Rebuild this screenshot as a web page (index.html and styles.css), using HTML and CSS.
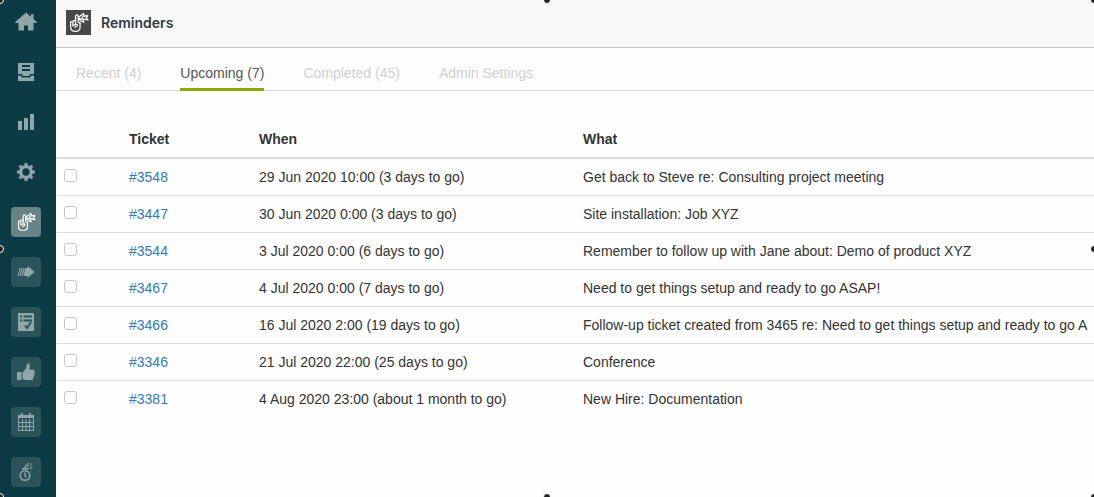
FILE: index.html
```html
<!DOCTYPE html>
<html lang="en">
<head>
  <meta charset="UTF-8" />
  <meta name="viewport" content="width=device-width, initial-scale=1.0"/>
  <title>Reminders</title>
  <link rel="stylesheet" href="styles.css">
</head>

<body>
  <!-- Shared icon -->
  <svg class="defs" width="0" height="0" aria-hidden="true">
    <symbol id="reminder" viewBox="0 0 20 20">
      <g fill="none" stroke="currentColor" stroke-width="1.2" stroke-linejoin="round" stroke-linecap="round">
        <path d="M2.500 10v4.500c0 2.500 1.800 4 4.500 4s4.500-1.600 4.500-4V10.500"/>
        <path d="M2.500 10.200c0-1.800 2.300-1.800 2.300 0V12M4.800 9.300c0-1.800 2.400-1.800 2.400 0V11M7.200 9V4.200c0-1.800 2.600-1.800 2.600 0V9.800c1 0 1.700.3 1.700 1.200"/>
        <path d="M4.500 13l3-1.200c1.500-.4 1.900 1.200.7 1.800l-1.700.8"/>
        <path d="M9.800 5.200l5-3.700.4 2.500 3.600-.6-1.300 2 1.500 2.200-4.300-.9-1.200.1M9.800 6l4 .7 1.400 3-2.200-.6-3.200-2.600M14.500 4.200l-1 1.200"/>
      </g>
    </symbol>
  </svg>

  <div class="app">
    <nav class="sidebar" aria-label="Main">
      <button class="nav-item" aria-label="Home">
        <svg width="24" height="20" viewBox="0 0 24 20"><path fill="currentColor" d="M12 0.500L1 10.200V11h3.500v7.500H10v-5h4v5h5.500V11H23v-.8L19.500 7V2H17v2.800z"/></svg>
      </button>
      <button class="nav-item" aria-label="Views">
        <svg width="18" height="18" viewBox="0 0 18 18"><path fill="currentColor" fill-rule="evenodd" d="M1 0h16v11h-3.500L12 13H6l-1.500-2H1zM5 2v2h8V2zM5 6v2h8V6zM1 12.500h2.500L5 14.500h8l1.500-2H17V18H1z"/></svg>
      </button>
      <button class="nav-item" aria-label="Reporting">
        <svg width="18" height="18" viewBox="0 0 18 18"><path fill="currentColor" d="M1 8h4v9H1zM7 5h4v12H7zM13 1h4v16h-4z"/></svg>
      </button>
      <button class="nav-item" aria-label="Admin">
        <svg width="18" height="18" viewBox="0 0 18 18">
          <g fill="currentColor">
            <rect x="7.500" y="0" width="3" height="18" rx="0.500"/>
            <rect x="7.500" y="0" width="3" height="18" rx="0.500" transform="rotate(45 9 9)"/>
            <rect x="7.500" y="0" width="3" height="18" rx="0.500" transform="rotate(90 9 9)"/>
            <rect x="7.500" y="0" width="3" height="18" rx="0.500" transform="rotate(135 9 9)"/>
            <circle cx="9" cy="9" r="7"/>
          </g>
          <circle class="hole" cx="9" cy="9" r="3.700"/>
        </svg>
      </button>
      <button class="nav-item tile active" aria-label="Reminders">
        <svg width="20" height="20"><use href="#reminder"/></svg>
      </button>
      <button class="nav-item tile" aria-label="Forward">
        <svg width="18" height="14" viewBox="0 0 18 14"><path fill="currentColor" d="M8.500 3H11V1l6.500 6-7 6v-2H6.500zM6.500 3h1.300L5.800 11H4.500zM4.400 3h1.300L3.700 11H2.400zM2.500 3h1L1.500 11h-1z"/></svg>
      </button>
      <button class="nav-item tile" aria-label="Tasks">
        <svg width="18" height="18" viewBox="0 0 18 18">
          <path fill="currentColor" d="M1 0h16v18H1z"/>
          <path class="cut" d="M3 3.500h2M6.500 3.500H15M3 7.500h2M6.500 7.500H15M8 12.500l2 2.500 4-6"/>
        </svg>
      </button>
      <button class="nav-item tile" aria-label="Satisfaction">
        <svg width="18" height="18" viewBox="0 0 18 18"><path fill="currentColor" d="M0 9h4.500v8H0zM5.500 9.200C8 7.500 9.500 5 9.800 2c.1-1.500 1-2 1.900-1.500 1.800 1 1.500 3.500.3 6H16c1.500 0 2.200 1.500 1.400 2.500.6 1 .4 2-.4 2.500.4 1 .2 2-.6 2.400.3 1.700-.4 3.100-2.400 3.100H9c-1.500 0-2.500-.5-3.500-1z"/></svg>
      </button>
      <button class="nav-item tile" aria-label="Calendar">
        <svg width="18" height="18" viewBox="0 0 18 18">
          <path fill="currentColor" d="M1 2h16v3H1zM4 0h2v3H4zM12 0h2v3h-2z"/>
          <path fill="none" stroke="currentColor" d="M1.500 5v12.500h15V5M5.500 6v11M9 6v11M12.500 6v11M1.500 9.500h15M1.500 13.500h15"/>
        </svg>
      </button>
      <button class="nav-item tile" aria-label="Timers">
        <svg width="14" height="20" viewBox="0 0 14 20">
          <g fill="none" stroke="currentColor" stroke-width="1.500">
            <circle cx="6" cy="13.500" r="4.800"/>
            <path d="M6 10.500v3.200l1.500 1.500M4 8V6.700h4V8M6 6.500c0-3 1.500-3.500 3.500-3"/>
            <path d="M9.500 0.500v1.800M12.500 1.500l-1.200 1.300M13.500 4.500h-1.800M12.500 7l-1.200-1.200M9.500 5v1.700" stroke-width="1.200"/>
          </g>
        </svg>
      </button>
    </nav>

    <main class="content">
      <header class="topbar">
        <span class="app-logo"><svg width="21" height="21"><use href="#reminder"/></svg></span>
        <h1>Reminders</h1>
      </header>

      <nav class="tabs" aria-label="Reminder lists">
        <a href="#recent">Recent (4)</a>
        <a href="#upcoming" class="current" aria-current="page">Upcoming (7)</a>
        <a href="#completed">Completed (45)</a>
        <a href="#settings">Admin Settings</a>
      </nav>

      <table class="reminders">
        <thead>
          <tr>
            <th class="col-check"></th>
            <th class="col-ticket">Ticket</th>
            <th class="col-when">When</th>
            <th>What</th>
          </tr>
        </thead>
        <tbody>
          <tr>
            <td><input type="checkbox" aria-label="Select #3548"></td>
            <td><a href="#3548">#3548</a></td>
            <td>29 Jun 2020 10:00 (3 days to go)</td>
            <td>Get back to Steve re: Consulting project meeting</td>
          </tr>
          <tr>
            <td><input type="checkbox" aria-label="Select #3447"></td>
            <td><a href="#3447">#3447</a></td>
            <td>30 Jun 2020 0:00 (3 days to go)</td>
            <td>Site installation: Job XYZ</td>
          </tr>
          <tr>
            <td><input type="checkbox" aria-label="Select #3544"></td>
            <td><a href="#3544">#3544</a></td>
            <td>3 Jul 2020 0:00 (6 days to go)</td>
            <td>Remember to follow up with Jane about: Demo of product XYZ</td>
          </tr>
          <tr>
            <td><input type="checkbox" aria-label="Select #3467"></td>
            <td><a href="#3467">#3467</a></td>
            <td>4 Jul 2020 0:00 (7 days to go)</td>
            <td>Need to get things setup and ready to go ASAP!</td>
          </tr>
          <tr>
            <td><input type="checkbox" aria-label="Select #3466"></td>
            <td><a href="#3466">#3466</a></td>
            <td>16 Jul 2020 2:00 (19 days to go)</td>
            <td>Follow-up ticket created from 3465 re: Need to get things setup and ready to go A</td>
          </tr>
          <tr>
            <td><input type="checkbox" aria-label="Select #3346"></td>
            <td><a href="#3346">#3346</a></td>
            <td>21 Jul 2020 22:00 (25 days to go)</td>
            <td>Conference</td>
          </tr>
          <tr>
            <td><input type="checkbox" aria-label="Select #3381"></td>
            <td><a href="#3381">#3381</a></td>
            <td>4 Aug 2020 23:00 (about 1 month to go)</td>
            <td>New Hire: Documentation</td>
          </tr>
        </tbody>
      </table>
    </main>
  </div>

  <!-- Selection handles round the frame -->
  <div class="handles" aria-hidden="true">
    <i class="top left"></i>
    <i class="top center"></i>
    <i class="top right"></i>
    <i class="middle left"></i>
    <i class="middle right"></i>
    <i class="bottom left"></i>
    <i class="bottom center"></i>
    <i class="bottom right"></i>
  </div>
</body>
</html>
```
FILE: styles.css
```css
* {
  box-sizing: border-box;
}

body {
  margin: 0;
  font-family: "Liberation Sans", Arial, sans-serif;
  font-size: 14px;
  line-height: 20px;
  color: #333;
  background: #fefefe;
}

.defs {
  position: absolute;
}

.app {
  display: flex;
  height: 100vh;
  overflow: hidden;
}

/* Sidebar */
.sidebar {
  flex: none;
  display: flex;
  flex-direction: column;
  gap: 20px;
  width: 56px;
  padding: 7px 0 0 11px;
  background: #0c3b43;
}

.nav-item {
  flex: none;
  display: flex;
  align-items: center;
  justify-content: center;
  width: 30px;
  height: 30px;
  padding: 0;
  border: none;
  border-radius: 4px;
  background: none;
  color: #8fa6aa;
  cursor: pointer;
}

.tile {
  background: #2a535a;
}

.tile.active {
  background: #678386;
  color: #fff;
}

.hole {
  fill: #0c3b43;
}

.cut {
  fill: none;
  stroke: #2a535a;
  stroke-width: 2;
}

/* Header */
.content {
  flex: 1;
  min-width: 0;
  overflow: hidden;
}

.topbar {
  display: flex;
  align-items: center;
  gap: 10px;
  height: 48px;
  padding: 0 10px 2px;
  background: #f9f9f9;
  border-bottom: 1px solid #c8c8c8;
}

.app-logo {
  display: flex;
  align-items: center;
  justify-content: center;
  width: 25px;
  height: 25px;
  background: #484848;
  color: #fff;
}

h1 {
  margin: 0;
  font-family: Inter, sans-serif;
  font-size: 14px;
  font-weight: 600;
  color: #2f3941;
}

/* Tabs */
.tabs {
  display: flex;
  gap: 39px;
  padding: 15px 20px 0;
  border-bottom: 1px solid #ddd;
}

.tabs a {
  margin-bottom: -1px;
  padding-bottom: 5px;
  border-bottom: 3px solid transparent;
  color: #d0d0d0;
  text-decoration: none;
}

.tabs .current {
  color: #555;
  border-bottom-color: #87ad00;
}

/* Reminder table */
.reminders {
  width: 100%;
  margin-top: 30px;
  border-spacing: 0;
  table-layout: fixed;
}

.reminders th,
.reminders td {
  padding: 8px;
  text-align: left;
  white-space: nowrap;
}

.reminders th {
  border-bottom: 2px solid #ddd;
}

.reminders td {
  border-bottom: 1px solid #ddd;
}

.reminders tr:last-child td {
  border-bottom: none;
}

.col-check {
  width: 65px;
}

.col-ticket {
  width: 130px;
}

.col-when {
  width: 324px;
}

.reminders a {
  color: #337ab7;
  text-decoration: none;
}

.reminders input {
  appearance: none;
  display: block;
  width: 13px;
  height: 13px;
  margin: 0 0 4px;
  border: 1px solid #c8c8c8;
  border-radius: 3px;
  background: #fff;
}

/* Selection handles */
.handles {
  position: fixed;
  inset: 0;
  overflow: hidden;
  pointer-events: none;
}

.handles i {
  position: absolute;
  width: 8px;
  height: 8px;
  margin: -4px;
  border: 1px solid #fff;
  border-radius: 50%;
  background: #222;
}

.handles .top {
  top: 0;
}

.handles .middle {
  top: 50%;
}

.handles .bottom {
  top: 100%;
}

.handles .left {
  left: 0;
}

.handles .center {
  left: 50%;
}

.handles .right {
  left: 100%;
}
```
